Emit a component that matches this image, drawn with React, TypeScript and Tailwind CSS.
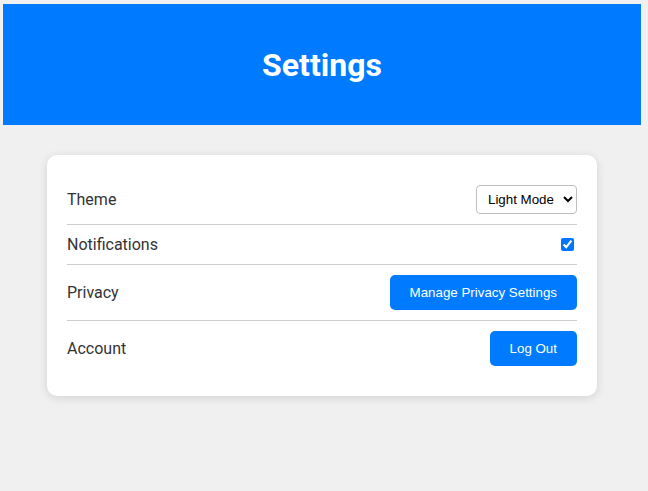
import { useState } from 'react'

const rowClass = 'flex items-center justify-between py-[10px] border-b border-[#cccccc]'

export default function App() {
  const [theme, setTheme] = useState('light')
  const [notify, setNotify] = useState(true)

  return (
    <div className="min-h-[491px] bg-[#f0f0f0] pt-[4px] pl-[3px] pr-[7px] font-['Roboto',sans-serif]">
      <header className="h-[121px] bg-[#007bff] flex items-center justify-center">
        <h1 className="text-[32px] font-bold text-white">Settings</h1>
      </header>

      <div className="mt-[30px] mx-auto w-[550px] bg-white rounded-[10px] shadow-[0_2px_10px_rgba(0,0,0,0.12)] p-[20px] text-[16px] leading-[19px] text-[#333333]">
        <div className={rowClass}>
          <span>Theme</span>
          <select
            value={theme}
            onChange={(e) => setTheme(e.target.value)}
            className="h-[29px] pl-[7px] pr-[6px] bg-white border border-[#bfbfbf] rounded-[4px] text-[13.33px] text-black font-['Liberation_Sans',Arial,sans-serif]"
          >
            <option value="light">Light Mode</option>
            <option value="dark">Dark Mode</option>
          </select>
        </div>

        <div className={rowClass}>
          <span>Notifications</span>
          <input
            type="checkbox"
            checked={notify}
            onChange={(e) => setNotify(e.target.checked)}
            className="w-[13px] h-[13px] mr-[3px] accent-[#0075ff]"
          />
        </div>

        <div className={rowClass}>
          <span>Privacy</span>
          <button className="bg-[#007bff] text-white rounded-[5px] px-[20px] py-[10px] text-[13.33px] leading-[15px] font-['Liberation_Sans',Arial,sans-serif]">
            Manage Privacy Settings
          </button>
        </div>

        <div className="flex items-center justify-between py-[10px]">
          <span>Account</span>
          <button className="bg-[#007bff] text-white rounded-[5px] px-[20px] py-[10px] text-[13.33px] leading-[15px] font-['Liberation_Sans',Arial,sans-serif]">
            Log Out
          </button>
        </div>
      </div>
    </div>
  )
}
